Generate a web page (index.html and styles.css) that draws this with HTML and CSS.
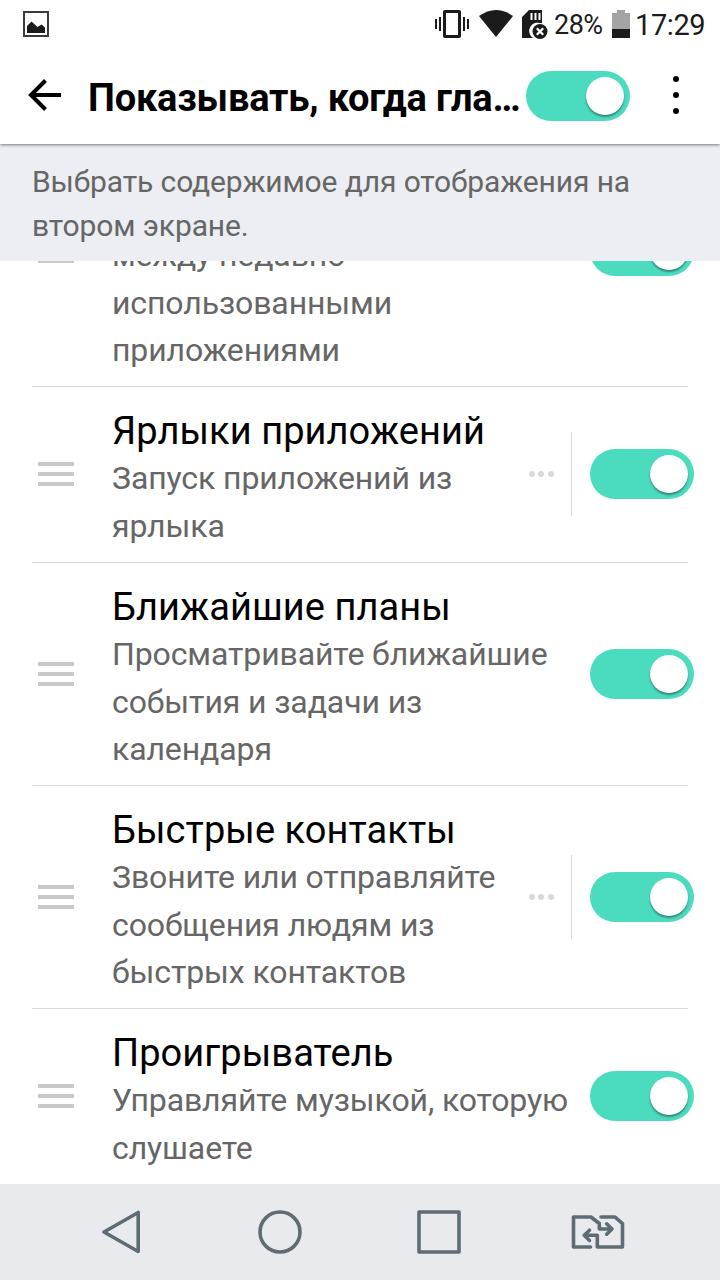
FILE: index.html
```
<!DOCTYPE html>
<html lang="ru">
<head>
<meta charset="utf-8">
<title>Второй экран</title>
<link rel="stylesheet" href="styles.css">
</head>
<body>
<div class="phone">
  <header class="status">
    <svg class="status-picture" width="26" height="26" viewBox="0 0 26 26"><rect x="1" y="1" width="24" height="24" fill="none" stroke="#3a3b3d" stroke-width="2"/><path d="M4 22v-7l4.500-4.500L14.500 16l4-2.500L22 16.500V22z" fill="#1b1b1b"/></svg>
    <svg class="status-vibrate" width="34" height="28" viewBox="0 0 34 28" fill="none" stroke="#1b1b1b"><rect x="9.500" y="1.500" width="15" height="25" rx=".5" stroke-width="3"/><path d="M1 9v10M5 7v14M29 7v14M33 9v10" stroke-width="2"/></svg>
    <svg class="status-wifi" width="34" height="27" viewBox="0 0 34 27"><path d="M0 6Q17-6 34 6L17 27z" fill="#1b1b1b"/></svg>
    <svg class="status-card" width="26" height="29" viewBox="0 0 26 29"><path d="M7 0h13v14a8 8 0 0 0-9 14H0V7z" fill="#1b1b1b"/><path d="M9.500 3v7M13.500 3v7M17.500 3v7" stroke="#fff" stroke-width="2"/><circle cx="18" cy="21.500" r="8.500" fill="#fff"/><circle cx="18" cy="21.500" r="7.500" fill="#1b1b1b"/><path d="M14.800 18.300l6.400 6.400M21.200 18.300l-6.400 6.400" stroke="#fff" stroke-width="2.300"/></svg>
    <span class="status-percent">28%</span>
    <svg class="status-battery" width="18" height="28" viewBox="0 0 18 28"><path d="M0 3h5V0h8v3h5v16H0z" fill="#a4a4a4"/><path d="M0 19h18v9H0z" fill="#1b1b1b"/></svg>
    <span class="status-time">17:29</span>
  </header>

  <nav class="bar">
    <svg class="back" width="34" height="32" viewBox="0 0 34 32" fill="none" stroke="#000" stroke-width="4"><path d="M33 16H3M17.500 1.500L3 16l14.500 14.500"/></svg>
    <h1 class="bar-title">Показывать, когда гла…</h1>
    <span class="toggle"></span>
    <svg class="more" width="6" height="38" viewBox="0 0 6 38"><circle cx="3" cy="3" r="3"/><circle cx="3" cy="19" r="3"/><circle cx="3" cy="35" r="3"/></svg>
  </nav>

  <p class="hint">Выбрать содержимое для отображения на<br>втором экране.</p>

  <main class="viewport">
    <ul class="list">
      <li class="row row-first">
        <span class="grip"></span>
        <div class="text text-end"><p class="desc">между недавно<br>использованными<br>приложениями</p></div>
        <span class="toggle"></span>
      </li>
      <li class="row">
        <span class="grip"></span>
        <div class="text"><h2 class="name">Ярлыки приложений</h2><p class="desc">Запуск приложений из<br>ярлыка</p></div>
        <div class="extra"><i class="dot"></i><i class="dot"></i><i class="dot"></i></div>
        <span class="toggle"></span>
      </li>
      <li class="row">
        <span class="grip"></span>
        <div class="text"><h2 class="name">Ближайшие планы</h2><p class="desc">Просматривайте ближайшие<br>события и задачи из<br>календаря</p></div>
        <span class="toggle"></span>
      </li>
      <li class="row">
        <span class="grip"></span>
        <div class="text"><h2 class="name">Быстрые контакты</h2><p class="desc">Звоните или отправляйте<br>сообщения людям из<br>быстрых контактов</p></div>
        <div class="extra"><i class="dot"></i><i class="dot"></i><i class="dot"></i></div>
        <span class="toggle"></span>
      </li>
      <li class="row row-last">
        <span class="grip"></span>
        <div class="text"><h2 class="name">Проигрыватель</h2><p class="desc">Управляйте музыкой, которую<br>слушаете</p></div>
        <span class="toggle"></span>
      </li>
    </ul>
  </main>

  <footer class="nav">
    <svg width="44" height="48" viewBox="0 0 44 48"><path d="M38.200 4.500v39L4 24z"/></svg>
    <svg width="48" height="48" viewBox="0 0 48 48"><circle cx="24" cy="24" r="20"/></svg>
    <svg width="48" height="48" viewBox="0 0 48 48"><rect x="4" y="4" width="40" height="40"/></svg>
    <svg width="54" height="48" viewBox="0 0 54 48"><path d="M19.500 39H2.500V9H20l8.300 6.500V21h12.500M35.700 15.800l5.300 5.200-5.300 5.200M30 9h14l7.500 6.700V39H26.300V27.300H13.500M18.500 22.200l-5.300 5.100 5.300 5.200"/></svg>
  </footer>
</div>
</body>
</html>
```
FILE: styles.css
```
* { box-sizing: border-box; margin: 0; padding: 0; }
body { background: #fff; font-family: Roboto, sans-serif; }
svg { display: block; flex: none; }
.phone { width: 720px; height: 1280px; display: flex; flex-direction: column; overflow: hidden; background: #fff; }

.status { height: 50px; flex: none; display: flex; align-items: flex-start; padding: 10px 0 0 23px; color: #1b1b1b; }
.status-picture { margin-top: 1px; }
.status-vibrate { margin-left: 386px; }
.status-wifi { margin-left: 10px; }
.status-card { margin-left: 9px; }
.status-percent { margin-left: 6px; width: 52px; font-size: 27px; line-height: 30px; letter-spacing: -.5px; }
.status-battery { margin-left: 6px; }
.status-time { margin-left: 5px; font-size: 29px; line-height: 30px; letter-spacing: -.4px; }

.bar { height: 94px; flex: none; position: relative; z-index: 2; display: flex; align-items: center; padding: 0 0 3px 28px; background: #fff; box-shadow: 0 1px 3px rgba(0, 0, 0, .5); clip-path: inset(0 0 -6px 0); }
.back { margin-top: -1px; }
.bar-title { width: 437px; margin: 5px 1px 0 26px; font-size: 38px; line-height: 46px; font-weight: 700; letter-spacing: -.19px; white-space: nowrap; color: #000; }
.more { margin: -1px 0 0 43px; }

.toggle { flex: none; width: 104px; height: 50px; padding: 6px; border-radius: 25px; background: #4bdcc0; display: flex; justify-content: flex-end; }
.toggle::after { content: ""; width: 38px; height: 38px; border-radius: 50%; background: #fff; box-shadow: 0 2px 2px rgba(30, 80, 70, .6); }

.hint { height: 117px; flex: none; padding: 16px 32px 0; background: #edeef3; color: #666; font-size: 30px; line-height: 44px; letter-spacing: -.11px; }

.viewport { flex: 1; min-height: 0; overflow: hidden; }
.list { list-style: none; margin-top: -145px; padding: 0 26px 0 32px; }
.row { display: flex; align-items: center; height: 223px; padding: 0 0 2px 6px; background: linear-gradient(#d9d9d9, #d9d9d9) left bottom / 656px 1px no-repeat; }
.row:nth-child(2), .row-last { height: 176px; }
.row-first { height: 271px; }
.row-last { background: none; }
.grip { flex: none; width: 36px; height: 24px; background: linear-gradient(#c9c9c9 0 4px, transparent 4px 10px, #c9c9c9 10px 14px, transparent 14px 20px, #c9c9c9 20px); }
.text { flex: 1; min-width: 0; margin-left: 38px; white-space: nowrap; align-self: flex-start; padding-top: 20px; }
.text-end { align-self: flex-end; padding-bottom: 10.500px; }
.name { font-size: 38px; line-height: 48px; font-weight: 400; letter-spacing: .07px; color: #000; }
.desc { font-size: 32px; line-height: 47.500px; letter-spacing: -.11px; color: #666; }
.extra { height: 84px; margin-right: 18px; padding-right: 17.500px; border-right: 1px solid #d9d9d9; display: flex; align-items: center; gap: 3.500px; }
.dot { width: 6px; height: 6px; border-radius: 50%; background: #d9d9d9; }

.nav { height: 96px; flex: none; background: #e8eaee; display: flex; align-items: center; padding-left: 100px; }
.nav svg { fill: none; stroke: #5f6c74; stroke-width: 3.600; stroke-linejoin: round; stroke-linecap: round; }
.nav svg:nth-child(2) { margin-left: 112px; }
.nav svg:nth-child(3) { margin-left: 111px; }
.nav svg:nth-child(4) { margin-left: 108px; }
```
